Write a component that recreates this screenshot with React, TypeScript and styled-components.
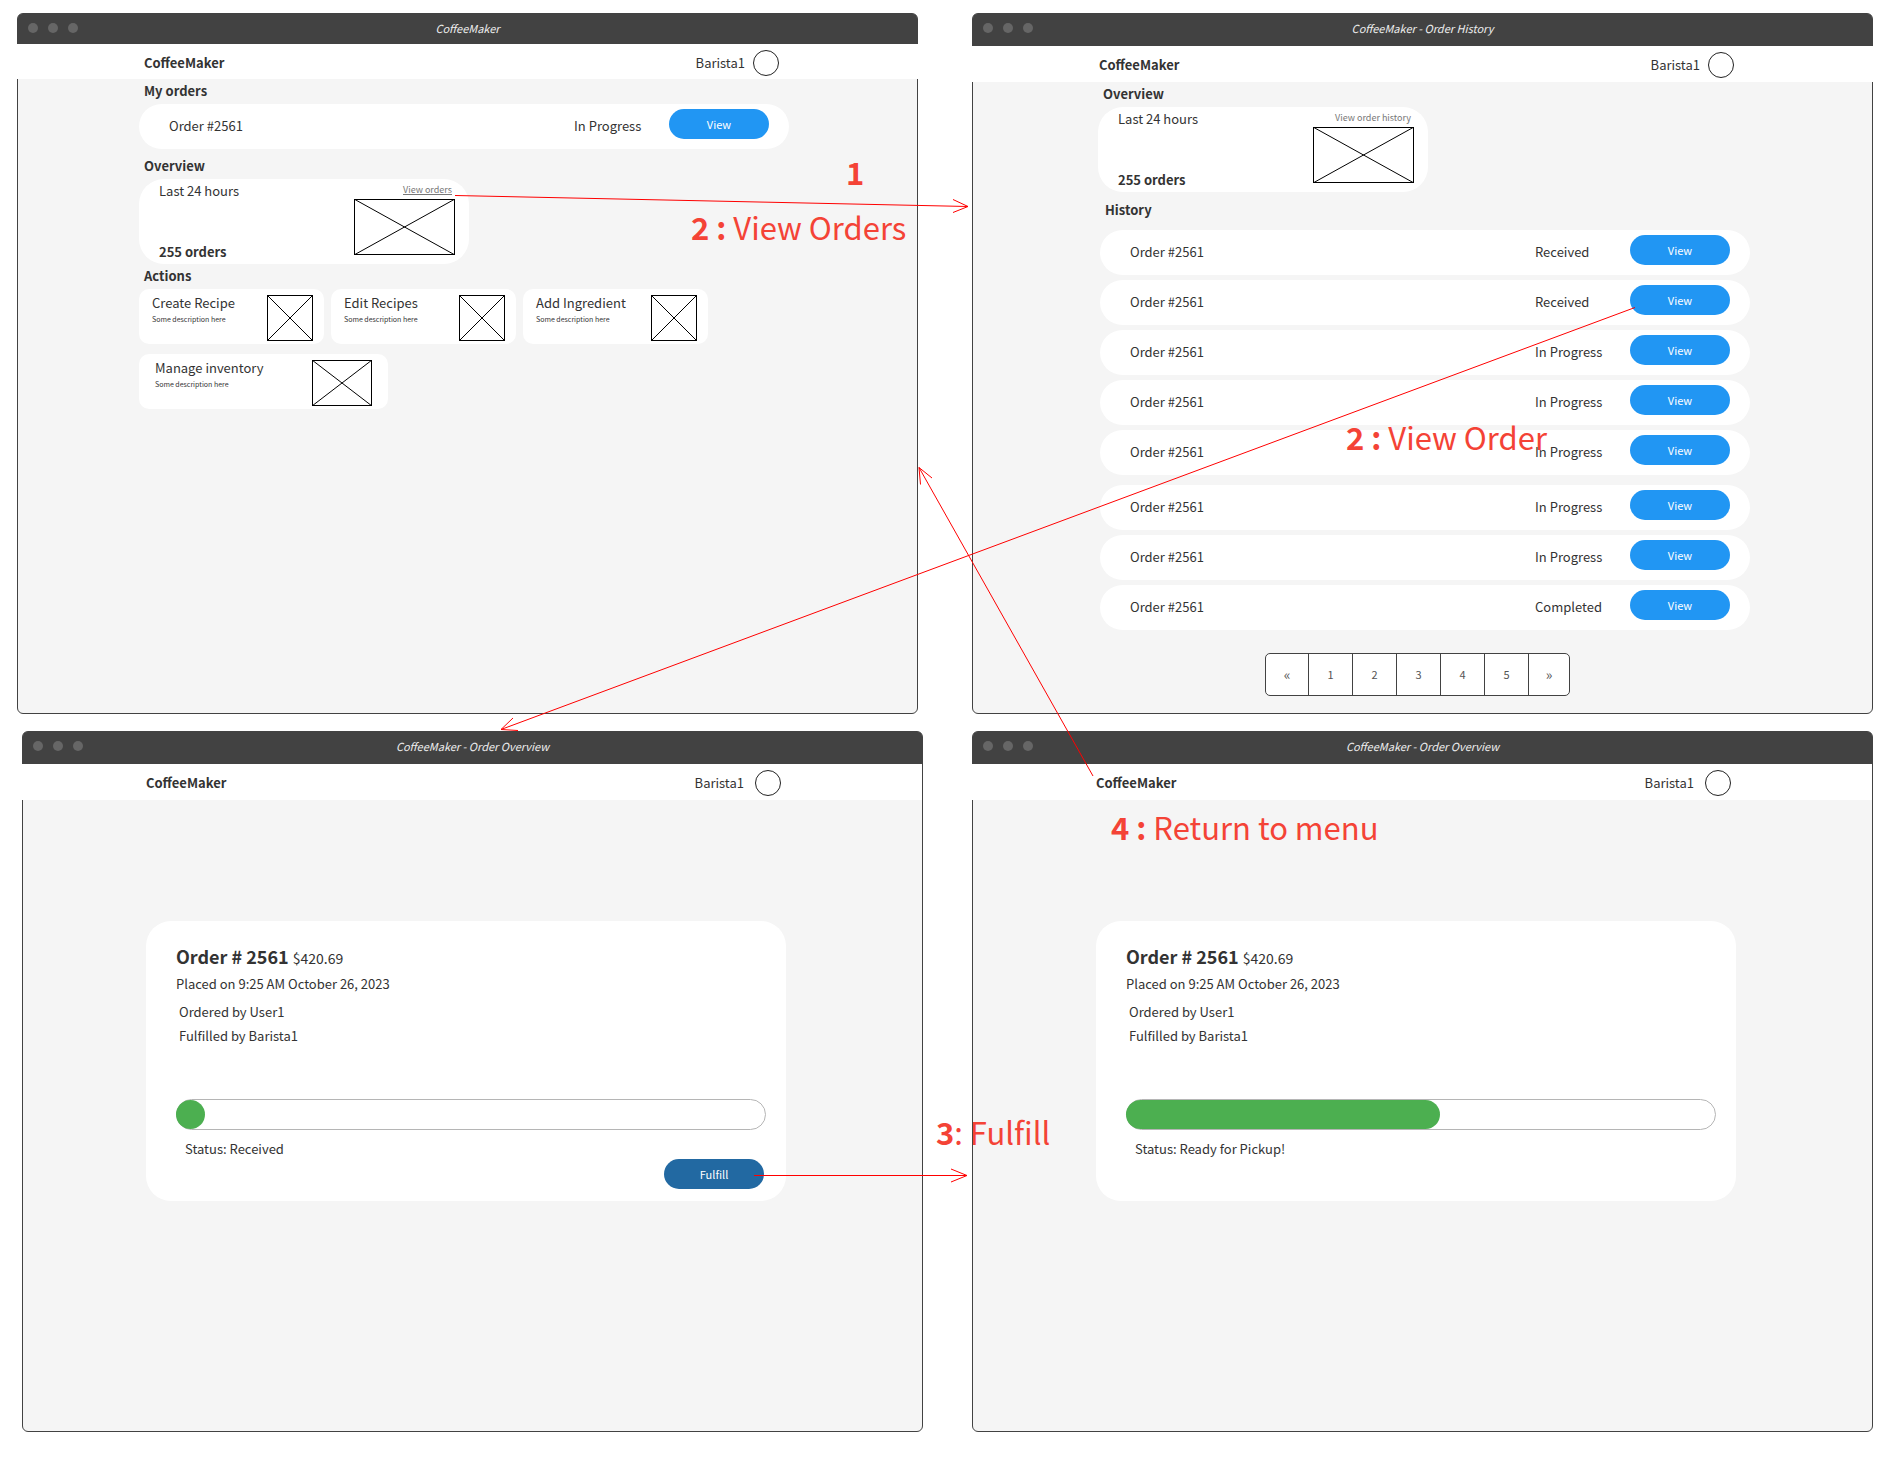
import React from "react";
import styled, { createGlobalStyle, css } from "styled-components";

const GlobalStyle = createGlobalStyle`
  *, *::before, *::after { box-sizing: border-box; }
  body {
    margin: 0;
    background: #fff;
    color: #333;
    font-family: "Noto Sans CJK SC", "Noto Sans", sans-serif;
    font-size: 13px;
    line-height: 20px;
  }
  h1, h2, h3, p, ul { margin: 0; padding: 0; font-size: inherit; }
  ul { list-style: none; }
`;

const Board = styled.main`
  position: relative;
  padding: 13px 11px 26px 17px;
  display: flex;
  flex-direction: column;
  gap: 17px;
`;

const BoardRow = styled.div<{ $inset?: number }>`
  display: grid;
  grid-template-columns: minmax(0, 1fr) minmax(0, 1fr);
  gap: ${(p) => 54 - (p.$inset ?? 0)}px;
  padding-left: ${(p) => p.$inset ?? 0}px;
`;

const Frame = styled.section`
  min-height: 701px;
  border: 1px solid #424242;
  border-radius: 6px;
  background: #f5f5f5;
`;

const TitleBar = styled.div<{ $compact?: boolean }>`
  display: grid;
  grid-template-columns: 60px 1fr 60px;
  height: ${(p) => (p.$compact ? 30 : 32)}px;
  padding: 0 10px;
  background: #424242;
  border-radius: 4px 4px 0 0;
`;

const Dots = styled.div`
  display: flex;
  gap: 10px;
  padding-top: 9px;
  span {
    width: 10px;
    height: 10px;
    border-radius: 50%;
    background: #666;
  }
`;

const WindowTitle = styled.h1`
  padding-top: 4px;
  text-align: center;
  font-size: 11px;
  font-weight: 400;
  font-style: italic;
  color: #eee;
`;

const AppHeader = styled.header<{ $compact?: boolean; $detail?: boolean }>`
  display: flex;
  align-items: center;
  justify-content: space-between;
  height: ${(p) => (p.$compact ? 35 : 36)}px;
  background: #fff;
  ${(p) =>
    p.$detail
      ? css`
          margin-left: -1px;
          padding: 2px 141px 0 124px;
        `
      : css`
          margin: 0 -1px;
          padding: 2px 139px 0 127px;
        `}
`;

const Brand = styled.a`
  color: #333;
  font-weight: 700;
  text-decoration: none;
`;

const User = styled.div<{ $gap: number }>`
  display: flex;
  align-items: center;
  gap: ${(p) => p.$gap}px;
`;

const Avatar = styled.span`
  width: 26px;
  height: 26px;
  border: 1px solid #222;
  border-radius: 50%;
`;

const Content = styled.div<{ $left: number }>`
  padding-left: ${(p) => p.$left}px;
`;

const Heading = styled.h2<{ $space?: "loose" | "wide" }>`
  height: 25px;
  padding: 2px 5px 0;
  font-weight: 700;
  ${(p) => p.$space === "loose" && "margin-top: 5px;"}
  ${(p) => p.$space === "wide" && "height: 38px; padding-top: 8px;"}
`;

const History = styled.div`
  padding-left: 2px;
`;

const OrderList = styled.ul`
  display: flex;
  flex-direction: column;
  gap: 5px;
  & + & { margin-top: 10px; }
`;

const OrderRow = styled.li`
  display: grid;
  grid-template-columns: 1fr 95px 100px;
  align-items: center;
  width: 650px;
  max-width: 100%;
  height: 45px;
  padding: 0 20px 2px 30px;
  border-radius: 23px;
  background: #fff;
`;

const PillButton = styled.button<{ $dark?: boolean }>`
  width: 100px;
  height: 30px;
  padding: 0 0 1px;
  border: 0;
  border-radius: 15px;
  background: ${(p) => (p.$dark ? "#2269a2" : "#2196f3")};
  color: #fff;
  font: inherit;
  font-size: 11px;
`;

const RowButton = styled(PillButton)`
  align-self: start;
  margin-top: 5px;
`;

const StatCard = styled.div`
  display: flex;
  justify-content: space-between;
  width: 330px;
  height: 85px;
  padding: 2px 14px 2px 20px;
  border-radius: 25px;
  background: #fff;
`;

const StatText = styled.div`
  display: flex;
  flex-direction: column;
  justify-content: space-between;
`;

const StatSide = styled.div`
  display: flex;
  flex-direction: column;
  align-items: flex-end;
`;

const SmallLink = styled.a<{ $underlined?: boolean }>`
  height: 18px;
  margin-right: 3px;
  line-height: 18px;
  font-size: 9px;
  color: #777;
  text-decoration: ${(p) => (p.$underlined ? "underline" : "none")};
`;

const ActionGrid = styled.div`
  display: flex;
  flex-wrap: wrap;
  gap: 10px 7px;
  max-width: 600px;
`;

const ActionCard = styled.article<{ $wide?: boolean }>`
  display: flex;
  justify-content: space-between;
  width: ${(p) => (p.$wide ? 249 : 185)}px;
  height: 55px;
  padding: ${(p) => (p.$wide ? "6px 16px" : "6px 11px 6px 13px")};
  border-radius: 10px;
  background: #fff;
`;

const ActionTitle = styled.h3`
  line-height: 16px;
  font-weight: 400;
`;

const ActionText = styled.p`
  font-size: 7px;
  line-height: 16px;
`;

const Picture = styled.svg`
  display: block;
  flex: none;
  fill: none;
  stroke: #000;
`;

const Pager = styled.nav`
  display: flex;
  width: 305px;
  height: 43px;
  margin: 23px 0 0 165px;
  border: 1px solid #424242;
  border-radius: 5px;
  background: #fff;
  overflow: hidden;
`;

const PageButton = styled.button<{ $arrow?: boolean }>`
  flex: 0 0 44px;
  padding: 0 0 2px;
  border: 0;
  background: none;
  color: #555;
  font: inherit;
  font-size: ${(p) => (p.$arrow ? 14 : 11)}px;
  & + & { border-left: 1px solid #424242; }
  &:first-child { flex-basis: 42px; }
  &:last-child { flex: 1; }
`;

const DetailArea = styled.div`
  padding: 121px 0 0 123px;
`;

const DetailCard = styled.article`
  display: flex;
  flex-direction: column;
  width: 640px;
  max-width: 100%;
  height: 280px;
  padding: 20px 20px 12px 30px;
  border-radius: 25px;
  background: #fff;
`;

const OrderTitle = styled.h2`
  height: 33px;
  line-height: 30px;
  font-size: 18px;
  font-weight: 700;
  span {
    font-size: 14px;
    font-weight: 400;
  }
`;

const People = styled.div`
  display: flex;
  flex-direction: column;
  gap: 4px;
  margin-top: 8px;
  padding-left: 3px;
`;

const Track = styled.div`
  height: 31px;
  margin-top: 53px;
  border: 1px solid #b5b5b5;
  border-radius: 16px;
`;

const Fill = styled.div`
  height: 29px;
  min-width: 29px;
  margin-left: -1px;
  border-radius: 15px;
  background: #4caf50;
`;

const Status = styled.p`
  margin-top: 9px;
  padding-left: 9px;
`;

const FulfillButton = styled(PillButton)`
  align-self: flex-end;
  margin: 0 2px;
`;

const Arrows = styled.svg`
  position: absolute;
  top: 0;
  left: 0;
  fill: none;
  stroke: #f00;
  pointer-events: none;
`;

const Note = styled.p<{ $x: number; $y: number }>`
  position: absolute;
  left: ${(p) => p.$x}px;
  top: ${(p) => p.$y}px;
  font-size: 31px;
  line-height: 40px;
  color: #f44336;
  white-space: nowrap;
`;

function Placeholder({ width, height }: { width: number; height: number }) {
  return (
    <Picture width={width} height={height} aria-hidden="true">
      <rect x=".5" y=".5" width={width - 1} height={height - 1} />
      <path d={`M0 0L${width} ${height}M${width} 0L0 ${height}`} />
    </Picture>
  );
}

type WindowProps = {
  title: string;
  compact?: boolean;
  detail?: boolean;
  children: React.ReactNode;
};

function AppWindow({ title, compact, detail, children }: WindowProps) {
  return (
    <Frame>
      <TitleBar $compact={compact}>
        <Dots><span /><span /><span /></Dots>
        <WindowTitle>{title}</WindowTitle>
      </TitleBar>
      <AppHeader $compact={compact} $detail={detail}>
        <Brand href="#">CoffeeMaker</Brand>
        <User $gap={detail ? 11 : 8}>
          Barista1
          <Avatar />
        </User>
      </AppHeader>
      {children}
    </Frame>
  );
}

function Order({ status }: { status: string }) {
  return (
    <OrderRow>
      <span>Order #2561</span>
      <span>{status}</span>
      <RowButton type="button">View</RowButton>
    </OrderRow>
  );
}

function Stats({ link, underlined }: { link: string; underlined?: boolean }) {
  return (
    <StatCard>
      <StatText>
        <span>Last 24 hours</span>
        <strong>255 orders</strong>
      </StatText>
      <StatSide>
        <SmallLink href="#" $underlined={underlined}>{link}</SmallLink>
        <Placeholder width={101} height={56} />
      </StatSide>
    </StatCard>
  );
}

function Action({ title, wide }: { title: string; wide?: boolean }) {
  return (
    <ActionCard $wide={wide}>
      <div>
        <ActionTitle>{title}</ActionTitle>
        <ActionText>Some description here</ActionText>
      </div>
      <Placeholder width={wide ? 60 : 46} height={46} />
    </ActionCard>
  );
}

type DetailProps = { status: string; progress: number; action?: string };

function OrderDetail({ status, progress, action }: DetailProps) {
  return (
    <DetailArea>
      <DetailCard>
        <OrderTitle>Order # 2561 <span>$420.69</span></OrderTitle>
        <p>Placed on 9:25 AM October 26, 2023</p>
        <People>
          <p>Ordered by User1</p>
          <p>Fulfilled by Barista1</p>
        </People>
        <Track role="progressbar" aria-label="Order progress" aria-valuenow={progress}>
          <Fill style={{ width: `${progress}%` }} />
        </Track>
        <Status>Status: {status}</Status>
        {action && <FulfillButton type="button" $dark>{action}</FulfillButton>}
      </DetailCard>
    </DetailArea>
  );
}

const recent = ["Received", "Received", "In Progress", "In Progress", "In Progress"];
const older = ["In Progress", "In Progress", "Completed"];
const pages = ["«", "1", "2", "3", "4", "5", "»"];

export default function App() {
  return (
    <>
      <GlobalStyle />
      <Board>
        <BoardRow>
          <AppWindow title="CoffeeMaker" compact>
            <Content $left={121}>
              <Heading>My orders</Heading>
              <OrderList><Order status="In Progress" /></OrderList>
              <Heading $space="loose">Overview</Heading>
              <Stats link="View orders" underlined />
              <Heading>Actions</Heading>
              <ActionGrid>
                <Action title="Create Recipe" />
                <Action title="Edit Recipes" />
                <Action title="Add Ingredient" />
                <Action title="Manage inventory" wide />
              </ActionGrid>
            </Content>
          </AppWindow>
          <AppWindow title="CoffeeMaker - Order History">
            <Content $left={125}>
              <Heading>Overview</Heading>
              <Stats link="View order history" />
              <History>
                <Heading $space="wide">History</Heading>
                <OrderList>{recent.map((s, i) => <Order key={i} status={s} />)}</OrderList>
                <OrderList>{older.map((s, i) => <Order key={i} status={s} />)}</OrderList>
                <Pager aria-label="Order pages">
                  {pages.map((p) => (
                    <PageButton type="button" key={p} $arrow={p === "«" || p === "»"}>{p}</PageButton>
                  ))}
                </Pager>
              </History>
            </Content>
          </AppWindow>
        </BoardRow>
        <BoardRow $inset={5}>
          <AppWindow title="CoffeeMaker - Order Overview" detail>
            <OrderDetail status="Received" progress={5} action="Fulfill" />
          </AppWindow>
          <AppWindow title="CoffeeMaker - Order Overview" detail>
            <OrderDetail status="Ready for Pickup!" progress={53.4} />
          </AppWindow>
        </BoardRow>

        <Arrows width="1884" height="1458" aria-hidden="true">
          <path d="M455 195.5L968 206.500M953 199.500L968 206.500L953 212.500" />
          <path d="M1635 307.500L501 729.500M513 718L501 729.500L518 730.500" />
          <path d="M754 1175.500H967M951 1169L967 1175.500L951 1182" />
          <path d="M1093 776L919 467.500M920.500 484.500L919 467.500L932 478" />
        </Arrows>
        <Note $x={846} $y={152}><b>1</b></Note>
        <Note $x={691} $y={207}><b>2 :</b> View Orders</Note>
        <Note $x={1346} $y={417}><b>2 :</b> View Order</Note>
        <Note $x={936} $y={1112}><b>3</b>: Fulfill</Note>
        <Note $x={1111} $y={807}><b>4 :</b> Return to menu</Note>
      </Board>
    </>
  );
}
